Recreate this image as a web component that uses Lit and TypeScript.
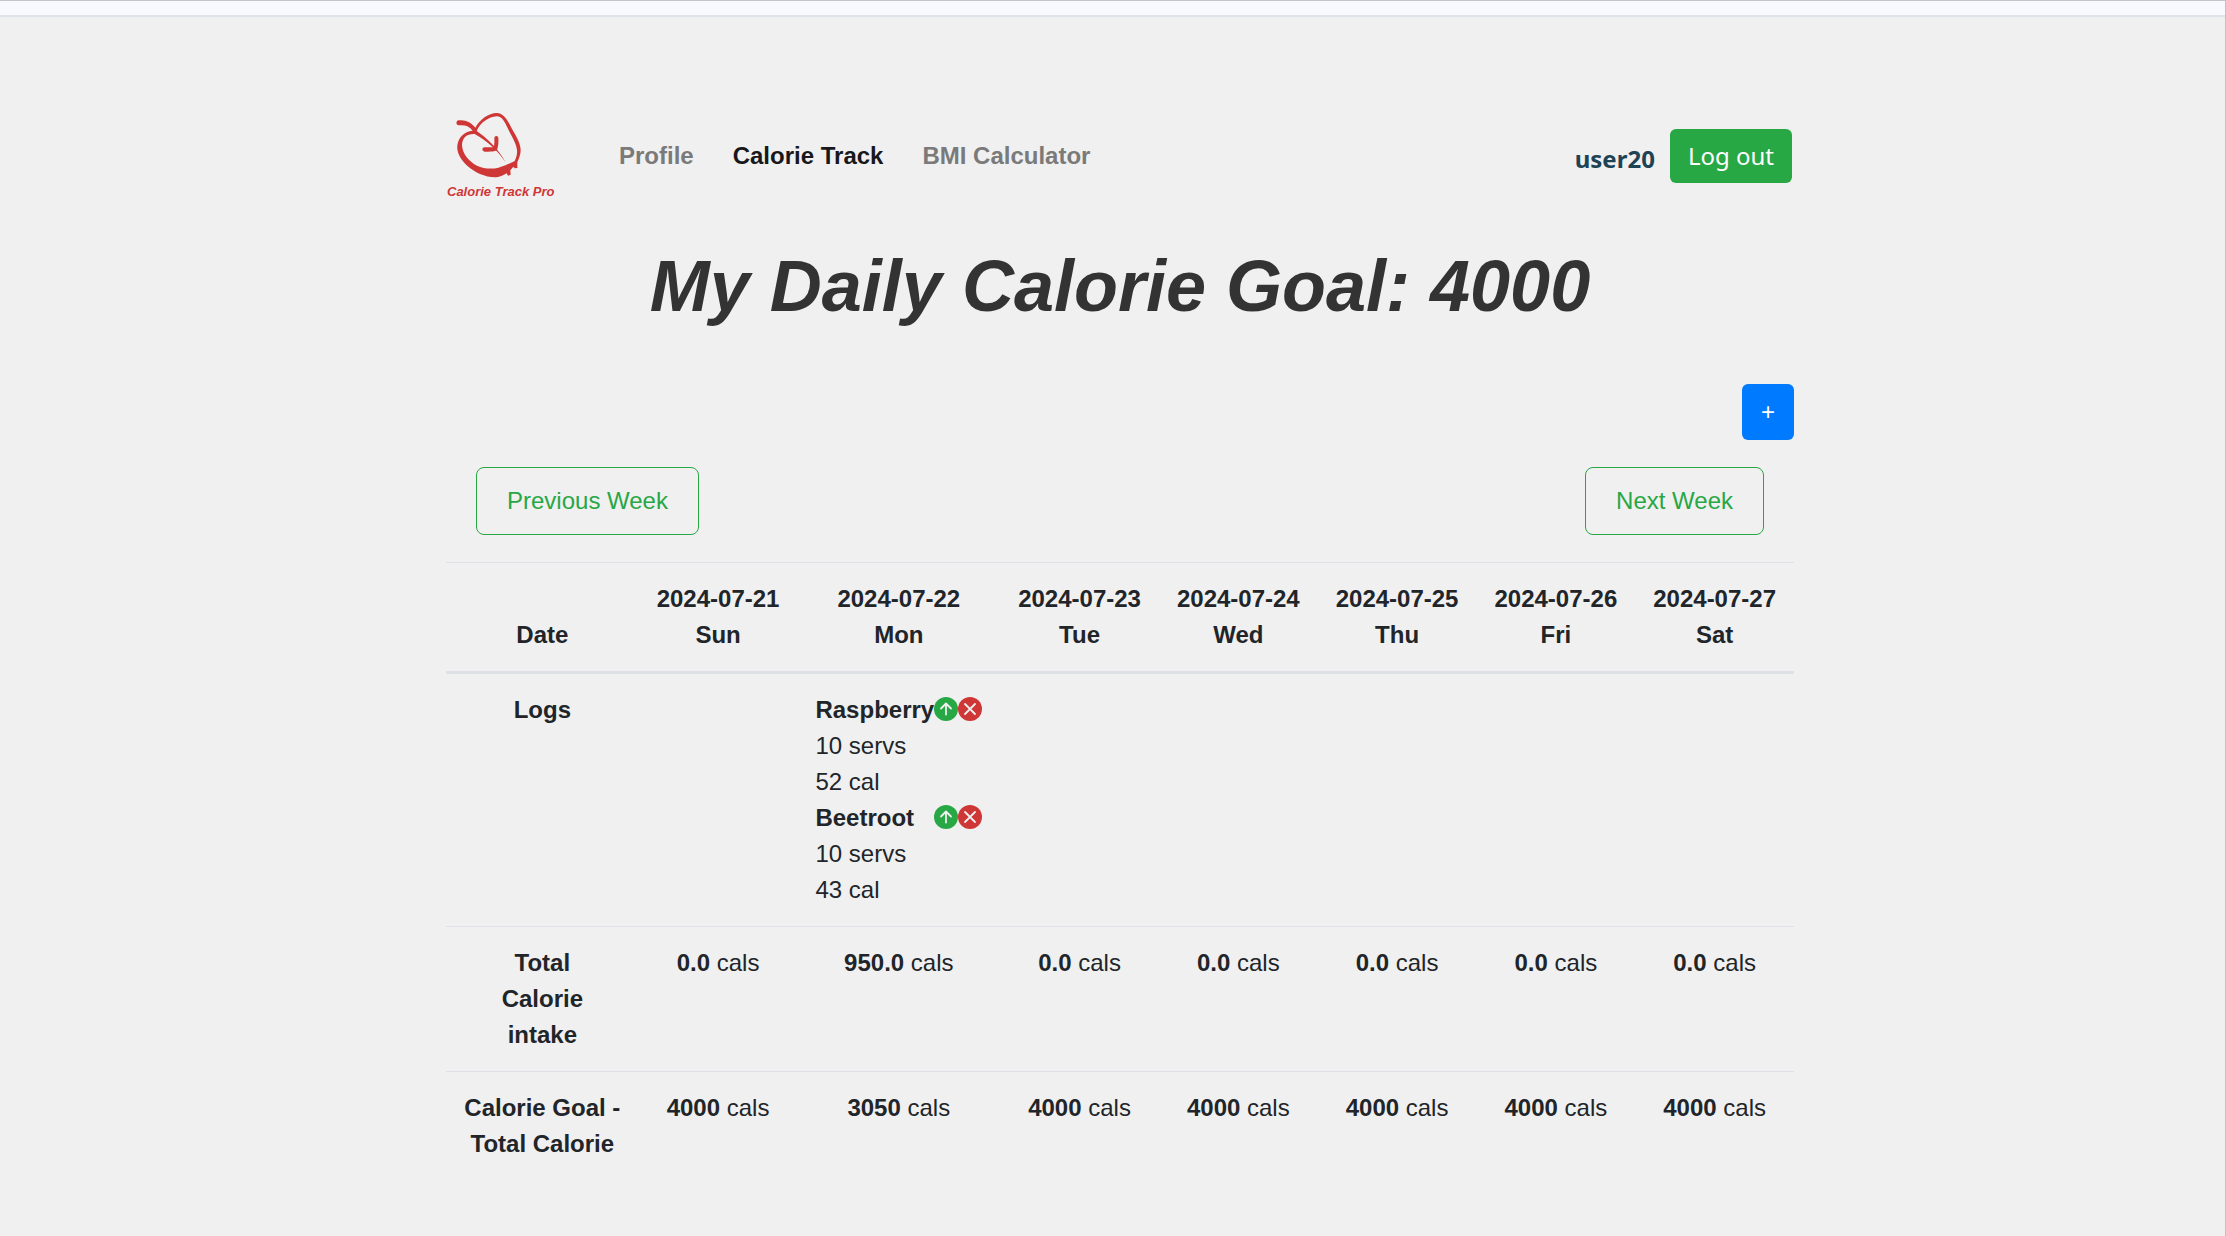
import { LitElement, html, css, nothing } from "lit";
import { customElement, state } from "lit/decorators.js";

interface FoodLog {
  name: string;
  servings: number;
  calories: number;
}

interface Day {
  date: string;
  weekday: string;
  logs: FoodLog[];
  intake: string;
  remaining: string;
}

const emptyDay = (date: string, weekday: string): Day => ({
  date,
  weekday,
  logs: [],
  intake: "0.0",
  remaining: "4000",
});

@customElement("app-root")
export class AppRoot extends LitElement {
  static styles = css`
    :host {
      display: block;
      box-sizing: border-box;
      min-height: 100vh;
      background: #f0f0f0;
      border-top: 1px solid #c3c3c8;
      border-right: 1px solid #c1c1c1;
      color: #212529;
      font-family: "Liberation Sans", Arial, sans-serif;
      font-size: 24px;
      line-height: 36px;
    }
    * {
      box-sizing: border-box;
    }
    .strip {
      height: 16px;
      background: #f8f9fe;
      border-bottom: 2px solid #dee2e9;
    }
    .page {
      max-width: 1363px;
      margin: 0 auto;
      padding: 90px 0 48px 15px;
    }
    .nav {
      display: flex;
      align-items: center;
      height: 98px;
    }
    .brand {
      display: flex;
      flex-direction: column;
      align-self: flex-start;
      width: 110px;
      color: #cf3636;
      font-size: 13px;
      font-style: italic;
      font-weight: 700;
      line-height: 18px;
      text-decoration: none;
      white-space: nowrap;
      padding-left: 1px;
    }
    .mark {
      width: 106px;
      height: 76px;
    }
    .links {
      display: flex;
      gap: 39px;
      margin-left: 63px;
    }
    .link {
      color: #7a7a7a;
      font-weight: 700;
      text-decoration: none;
    }
    .link.active {
      color: #18181a;
    }
    .account {
      display: flex;
      align-items: center;
      gap: 15px;
      margin-left: auto;
      padding-right: 2px;
      font-family: "Noto Sans", sans-serif;
    }
    .user {
      padding-top: 6px;
      color: #1d4354;
      font-weight: 700;
    }
    button {
      font: inherit;
      cursor: pointer;
    }
    .logout {
      height: 54px;
      padding: 0 18px;
      border: 0;
      border-radius: 6px;
      background: #28a745;
      color: #fff;
    }
    .goal {
      margin: 38px 0 0;
      color: #333;
      font-size: 72px;
      font-style: italic;
      font-weight: 700;
      line-height: 86px;
      text-align: center;
    }
    .tools {
      display: flex;
      justify-content: flex-end;
      margin-top: 55px;
    }
    .add {
      width: 52px;
      height: 56px;
      padding: 0;
      border: 0;
      border-radius: 6px;
      background: #007bff;
      color: #fff;
    }
    .weeks {
      display: flex;
      justify-content: space-between;
      padding: 27px 30px;
    }
    .week {
      height: 68px;
      padding: 0 30px;
      border: 1px solid #28a745;
      border-radius: 8px;
      background: transparent;
      color: #28a745;
    }
    .table {
      width: 100%;
      border-collapse: collapse;
      text-align: center;
    }
    .table th,
    .table td {
      padding: 18px;
      border-top: 1px solid #dee2e6;
      vertical-align: top;
      white-space: nowrap;
    }
    .table thead th {
      border-bottom: 3px solid #dee2e6;
      vertical-align: bottom;
    }
    .table .day {
      width: 1px;
    }
    .table .logs {
      text-align: left;
    }
    .logHead {
      display: flex;
      justify-content: space-between;
    }
    .actions {
      display: flex;
      height: 36px;
      padding-top: 5px;
    }
    .action {
      width: 24px;
      height: 24px;
      padding: 0;
      border: 0;
      border-radius: 50%;
      background: #28a745;
    }
    .action.remove {
      background: #cf3636;
    }
    .icon {
      display: block;
      width: 24px;
      height: 24px;
      fill: none;
      stroke: #f0f0f0;
      stroke-width: 1.8;
      stroke-linecap: round;
      stroke-linejoin: round;
    }
  `;

  @state() private days: Day[] = [
    emptyDay("2024-07-21", "Sun"),
    {
      date: "2024-07-22",
      weekday: "Mon",
      logs: [
        { name: "Raspberry", servings: 10, calories: 52 },
        { name: "Beetroot", servings: 10, calories: 43 },
      ],
      intake: "950.0",
      remaining: "3050",
    },
    emptyDay("2024-07-23", "Tue"),
    emptyDay("2024-07-24", "Wed"),
    emptyDay("2024-07-25", "Thu"),
    emptyDay("2024-07-26", "Fri"),
    emptyDay("2024-07-27", "Sat"),
  ];

  private renderMark() {
    return html`<svg class="mark" viewBox="53 20 318 228" fill="#cf3636" aria-hidden="true">
      <path
        d="M88 60 C108 57 126 66 138 82 C151 58 178 38 202 38 C221 39 232 55 242 74 C253 97 274 124 274 150 C274 164 268 176 264 186 L264 203 L256 204 L252 199 L243 210 L244 223 L236 226 L232 219 C224 224 212 230 200 231 C170 232 135 217 112 195 C92 175 82 155 84 136 C87 110 104 94 130 91 C120 78 108 73 88 75 C79 74 79 61 88 60 Z
           M142 92 C172 112 206 144 229 186 C206 152 174 121 136 101 C113 100 99 111 98 134 C99 160 118 183 143 196 C162 205 187 207 207 202 C231 195 246 187 256 182 C261 172 264 161 263 150 C262 130 246 106 236 85 C225 63 219 48 202 48 C178 49 152 68 142 92 Z"
        fill-rule="evenodd"
      />
      <path
        d="M195 114 C195 105 207 105 207 114 C208 126 207 138 203 150 C192 155 177 154 166 154 C157 153 157 141 166 141 C175 140 185 142 193 140 C196 132 195 121 195 114 Z"
      />
    </svg>`;
  }

  private renderLog(log: FoodLog) {
    return html`
      <div class="logHead">
        <strong>${log.name}</strong>
        <div class="actions">
          <button class="action" aria-label="Update ${log.name}">
            <svg class="icon" viewBox="0 0 24 24"><path d="M12 17.5V6.5M7 11.5l5-5 5 5" /></svg>
          </button>
          <button class="action remove" aria-label="Delete ${log.name}">
            <svg class="icon" viewBox="0 0 24 24"><path d="M7 7l10 10M17 7L7 17" /></svg>
          </button>
        </div>
      </div>
      <div>${log.servings} servs</div>
      <div>${log.calories} cal</div>
    `;
  }

  render() {
    return html`
      <div class="strip"></div>
      <div class="page">
        <header class="nav">
          <a class="brand" href="#">${this.renderMark()}<span>Calorie Track Pro</span></a>
          <nav class="links">
            <a class="link" href="#profile">Profile</a>
            <a class="link active" href="#track">Calorie Track</a>
            <a class="link" href="#bmi">BMI Calculator</a>
          </nav>
          <div class="account">
            <span class="user">user20</span>
            <button class="logout">Log out</button>
          </div>
        </header>
        <main>
          <h1 class="goal">My Daily Calorie Goal: 4000</h1>
          <div class="tools"><button class="add" aria-label="Add log">+</button></div>
          <div class="weeks">
            <button class="week">Previous Week</button>
            <button class="week">Next Week</button>
          </div>
          <table class="table">
            <thead>
              <tr>
                <th scope="col">Date</th>
                ${this.days.map((d) => html`<th class="day" scope="col">${d.date}<br />${d.weekday}</th>`)}
              </tr>
            </thead>
            <tbody>
              <tr>
                <th scope="row">Logs</th>
                ${this.days.map(
                  (d) => html`<td class="logs">${d.logs.length ? d.logs.map((l) => this.renderLog(l)) : nothing}</td>`
                )}
              </tr>
              <tr>
                <th scope="row">Total<br />Calorie<br />intake</th>
                ${this.days.map((d) => html`<td><strong>${d.intake}</strong> cals</td>`)}
              </tr>
              <tr>
                <th scope="row">Calorie Goal -<br />Total Calorie</th>
                ${this.days.map((d) => html`<td><strong>${d.remaining}</strong> cals</td>`)}
              </tr>
            </tbody>
          </table>
        </main>
      </div>
    `;
  }
}
